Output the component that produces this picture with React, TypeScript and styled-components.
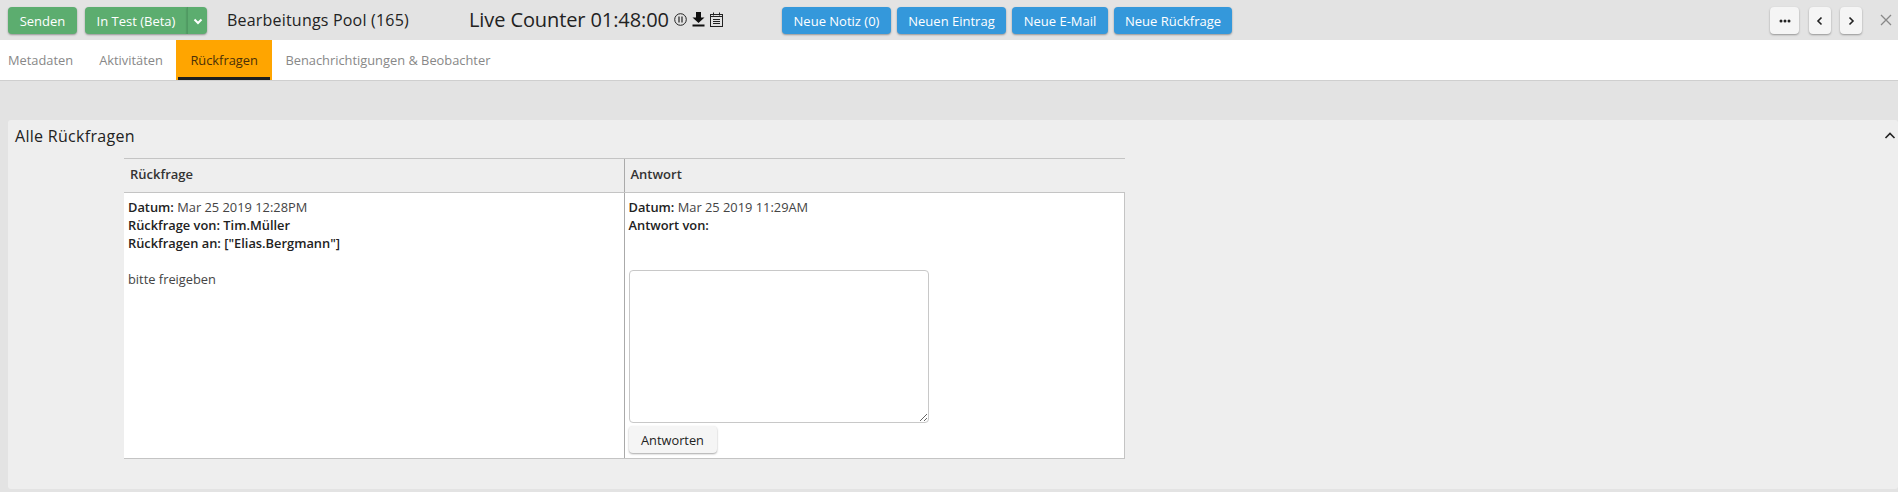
import React from 'react';
import styled, { createGlobalStyle } from 'styled-components';

const GlobalStyle = createGlobalStyle`
  html, body {
    margin: 0;
    padding: 0;
    height: 100%;
    overflow: hidden;
    background: #e3e3e3;
    font-family: 'Open Sans', sans-serif;
    font-size: 13px;
    color: #222;
  }
  * { box-sizing: border-box; }
`;

const Toolbar = styled.div`
  display: flex;
  align-items: center;
  height: 40px;
  padding: 0 6px 0 8px;
  background: #e3e3e3;
`;

const Button = styled.button<{ $kind?: 'green' | 'blue' | 'light'; $width: number }>`
  width: ${p => p.$width}px;
  height: 27px;
  padding: 0;
  margin-top: 1px;
  border: none;
  border-radius: 4px;
  font-family: 'Open Sans', sans-serif;
  font-size: 13px;
  display: flex;
  align-items: center;
  justify-content: center;
  box-shadow: 0 1px 2px rgba(0, 0, 0, 0.35);
  background: ${p => (p.$kind === 'green' ? '#5cad6f' : p.$kind === 'blue' ? '#3498db' : '#f5f5f5')};
  color: ${p => (p.$kind === 'light' || !p.$kind ? '#222' : '#fff')};
`;

const SplitGroup = styled.div`
  display: flex;
  margin-left: 8px;
`;

const SplitMain = styled(Button)`
  border-radius: 4px 0 0 4px;
`;

const SplitCaret = styled(Button)`
  border-radius: 0 4px 4px 0;
  border-left: 1px solid #4f9a62;
`;

const PoolTitle = styled.div`
  margin-left: 20px;
  width: 242px;
  font-size: 16px;
  letter-spacing: 0.2px;
  color: #222;
`;

const Counter = styled.div`
  display: flex;
  align-items: center;
  width: 313px;
  margin-bottom: 1px;
  font-size: 20px;
  letter-spacing: -0.1px;
  color: #222;
`;

const CounterIcons = styled.div`
  display: flex;
  align-items: center;
  gap: 5px;
  margin-left: 5px;
`;

const ActionGroup = styled.div`
  display: flex;
  gap: 6px;
`;

const RightGroup = styled.div`
  display: flex;
  align-items: center;
  margin-left: auto;
`;

const NavButtons = styled.div`
  display: flex;
  gap: 9px;
  margin-left: 10px;
`;

const CloseButton = styled.div`
  display: flex;
  margin-left: 18px;
`;

const Tabs = styled.div`
  display: flex;
  height: 41px;
  background: #fff;
  border-bottom: 1px solid #cfcfcf;
`;

const Tab = styled.div<{ $active?: boolean }>`
  display: flex;
  align-items: center;
  height: 40px;
  padding: 0 ${p => (p.$active ? 14.5 : 13)}px;
  font-size: 12.85px;
  color: ${p => (p.$active ? '#4a3008' : '#888')};
  background: ${p => (p.$active ? '#ffa500' : 'transparent')};
  position: relative;
  &:first-child { padding-left: 8px; }
  ${p =>
    p.$active &&
    `&::after {
      content: '';
      position: absolute;
      left: 2px;
      right: 2px;
      bottom: 0;
      height: 3px;
      background: #1e1e1e;
    }`}
`;

const Content = styled.div`
  padding: 39px 0 0 8px;
`;

const Panel = styled.section`
  height: 369px;
  background: #eee;
  border-radius: 3px;
`;

const PanelHeader = styled.div`
  display: flex;
  align-items: center;
  justify-content: space-between;
  height: 38px;
  padding: 0 2px 6px 7px;
  font-size: 16px;
  letter-spacing: 0.3px;
  font-weight: 400;
  color: #222;
`;

const Table = styled.table`
  margin-left: 116px;
  width: 1001px;
  border-collapse: collapse;
  table-layout: fixed;
`;

const HeadCell = styled.th`
  height: 34px;
  padding: 0 0 4px 6px;
  text-align: left;
  font-size: 13px;
  font-weight: 600;
  color: #333;
  border-top: 1px solid #c4c4c4;
  border-bottom: 1px solid #c4c4c4;
  & + & {
    border-left: 1px solid #aaa;
  }
`;

const BodyCell = styled.td`
  height: 266px;
  padding: 5px 4px 0;
  vertical-align: top;
  background: #fff;
  border-bottom: 1px solid #c4c4c4;
  & + & {
    border-left: 1px solid #aaa;
    border-right: 1px solid #c4c4c4;
  }
`;

const Line = styled.div`
  height: 18px;
  line-height: 18px;
  font-size: 12.85px;
  color: #444;
`;

const Strong = styled.span`
  font-weight: 600;
  color: #222;
`;

const Spacer = styled.div<{ $height: number }>`
  height: ${p => p.$height}px;
`;

const ReplyBox = styled.textarea`
  display: block;
  width: 300px;
  height: 153px;
  margin: 0;
  background: #fff;
  border: 1px solid #c8c8c8;
  border-radius: 4px;
  resize: both;
  outline: none;
`;

const ReplyButton = styled(Button)`
  margin-top: 3px;
  font-size: 12.8px;
`;

const ColRuckfrage = styled.col`
  width: 500px;
`;

const Chevron = ({ d, size = 12, color = '#222', weight = 1.6 }: { d: string; size?: number; color?: string; weight?: number }) => (
  <svg width={size} height={size} viewBox="0 0 12 12" fill="none" stroke={color} strokeWidth={weight}>
    <path d={d} />
  </svg>
);

const PauseIcon = () => (
  <svg width="13" height="13" viewBox="0 0 13 13" fill="none" stroke="#222" strokeWidth="1">
    <circle cx="6.500" cy="6.500" r="5.800" />
    <path d="M5 3.500v6M8 3.500v6" strokeWidth="1.200" />
  </svg>
);

const DownloadIcon = () => (
  <svg width="13" height="15" viewBox="0 0 13 15" fill="#111">
    <path d="M4 0h5v5.500h3.500L6.500 11 .5 5.500H4z" />
    <rect x="0.500" y="12.500" width="12" height="2" />
  </svg>
);

const CalendarIcon = () => (
  <svg width="13" height="15" viewBox="0 0 13 15" fill="none" stroke="#222" strokeWidth="1">
    <rect x="0.500" y="2.500" width="12" height="12" />
    <path d="M3.500 0.500v3M9.500 0.500v3M0.500 4.500h12M3 7.500h7M3 9.500h7M3 11.500h7" />
  </svg>
);

const App: React.FC = () => (
  <>
    <GlobalStyle />
    <Toolbar>
      <Button $kind="green" $width={69}>Senden</Button>
      <SplitGroup>
        <SplitMain $kind="green" $width={102}>In Test (Beta)</SplitMain>
        <SplitCaret $kind="green" $width={20}>
          <Chevron d="M2.500 4.500L6 8l3.500-3.500" color="#fff" weight={2} />
        </SplitCaret>
      </SplitGroup>
      <PoolTitle>Bearbeitungs Pool (165)</PoolTitle>
      <Counter>
        Live Counter 01:48:00
        <CounterIcons>
          <PauseIcon />
          <DownloadIcon />
          <CalendarIcon />
        </CounterIcons>
      </Counter>
      <ActionGroup>
        <Button $kind="blue" $width={109}>Neue Notiz (0)</Button>
        <Button $kind="blue" $width={109}>Neuen Eintrag</Button>
        <Button $kind="blue" $width={96}>Neue E-Mail</Button>
        <Button $kind="blue" $width={118}>Neue Rückfrage</Button>
      </ActionGroup>
      <RightGroup>
        <Button $width={29}>
          <svg width="12" height="4" viewBox="0 0 12 4" fill="#222">
            <circle cx="2" cy="2" r="1.500" />
            <circle cx="6" cy="2" r="1.500" />
            <circle cx="10" cy="2" r="1.500" />
          </svg>
        </Button>
        <NavButtons>
          <Button $width={22}><Chevron d="M7.500 2.500L4 6l3.500 3.500" /></Button>
          <Button $width={22}><Chevron d="M4.500 2.500L8 6l-3.500 3.500" /></Button>
        </NavButtons>
        <CloseButton>
          <svg width="12" height="12" viewBox="0 0 12 12" stroke="#888" strokeWidth="1.300">
            <path d="M1 1l10 10M11 1L1 11" />
          </svg>
        </CloseButton>
      </RightGroup>
    </Toolbar>
    <Tabs>
      <Tab>Metadaten</Tab>
      <Tab>Aktivitäten</Tab>
      <Tab $active>Rückfragen</Tab>
      <Tab>Benachrichtigungen &amp; Beobachter</Tab>
    </Tabs>
    <Content>
      <Panel>
        <PanelHeader>
          Alle Rückfragen
          <Chevron d="M1.500 8L6 3.500 10.500 8" size={12} />
        </PanelHeader>
        <Table>
          <colgroup>
            <ColRuckfrage />
            <col />
          </colgroup>
          <thead>
            <tr>
              <HeadCell>Rückfrage</HeadCell>
              <HeadCell>Antwort</HeadCell>
            </tr>
          </thead>
          <tbody>
            <tr>
              <BodyCell>
                <Line><Strong>Datum:</Strong> Mar 25 2019 12:28PM</Line>
                <Line><Strong>Rückfrage von: Tim.Müller</Strong></Line>
                <Line><Strong>Rückfragen an:</Strong> <Strong>["Elias.Bergmann"]</Strong></Line>
                <Spacer $height={18} />
                <Line>bitte freigeben</Line>
              </BodyCell>
              <BodyCell>
                <Line><Strong>Datum:</Strong> Mar 25 2019 11:29AM</Line>
                <Line><Strong>Antwort von:</Strong></Line>
                <Spacer $height={36} />
                <ReplyBox />
                <ReplyButton $width={88}>Antworten</ReplyButton>
              </BodyCell>
            </tr>
          </tbody>
        </Table>
      </Panel>
    </Content>
  </>
);

export default App;
